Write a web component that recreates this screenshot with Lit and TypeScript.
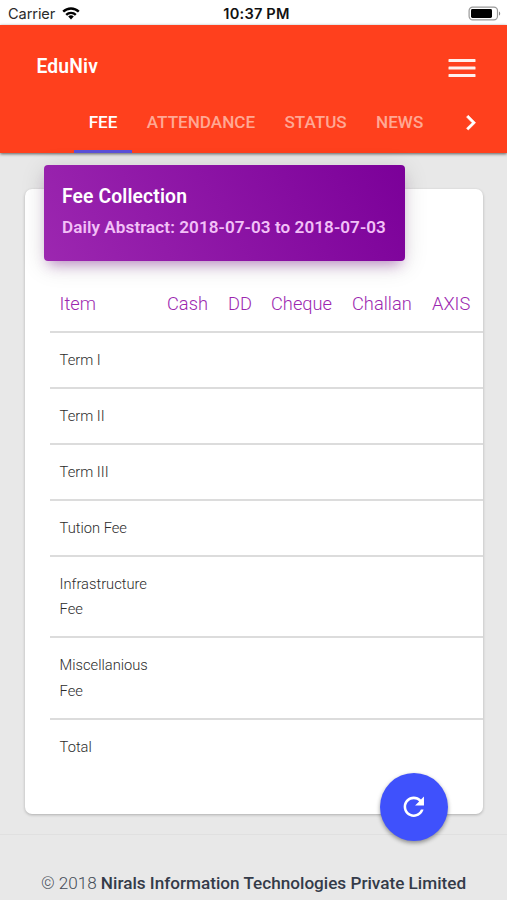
import { LitElement, html, css, svg } from "lit";
import { customElement } from "lit/decorators.js";
import { classMap } from "lit/directives/class-map.js";

const TABS = ["FEE", "ATTENDANCE", "STATUS", "NEWS"];
const COLUMNS = ["Item", "Cash", "DD", "Cheque", "Challan", "AXIS"];
const ROWS = ["Term I", "Term II", "Term III", "Tution Fee", "Infrastructure Fee", "Miscellanious Fee", "Total"];

const icon = (name: string, d: string, box = "0 0 24 24") =>
  html`<svg class=${name} viewBox=${box} fill="currentColor">${svg`<path d=${d} />`}</svg>`;

@customElement("status-bar")
class StatusBar extends LitElement {
  static styles = css`
    :host {
      display: grid;
      grid-template-columns: 1fr auto 1fr;
      align-items: center;
      box-sizing: border-box;
      height: 25px;
      padding: 3px 6px 0 8px;
      background: #fff;
      color: #111;
      font: 14.6px/20px Inter, sans-serif;
    }
    .left { display: flex; align-items: center; gap: 7px; }
    .carrier { color: #2a2a2a; letter-spacing: -0.1px; }
    .wifi { width: 18px; height: 14px; margin-top: -2px; }
    .time { font-weight: 600; font-size: 14.6px; letter-spacing: 0.2px; padding-left: 4px; }
    .battery { justify-self: end; width: 33px; height: 15px; margin-top: -2px; }
  `;
  render() {
    return html`
      <div class="left">
        <span class="carrier">Carrier</span>
        <svg class="wifi" viewBox="0 0 18 14" fill="none" stroke="#000" stroke-width="2.4">
          <path d="M1.2 5.6a11.2 11.2 0 0 1 15.6 0" />
          <path d="M4.2 8.8a6.9 6.9 0 0 1 9.6 0" />
          <path d="M9 13.4 6.2 10.6a4 4 0 0 1 5.6 0Z" fill="#000" stroke="none" />
        </svg>
      </div>
      <span class="time">10:37 PM</span>
      <svg class="battery" viewBox="0 0 33 15">
        <rect x="1.1" y="1.1" width="28.4" height="12.8" rx="3.6" fill="#fff" stroke="#999" stroke-width="1.2" />
        <rect x="3" y="3" width="21" height="9" rx="1.4" fill="#000" />
        <path d="M31 5.4c1.6.6 1.6 3.6 0 4.2Z" fill="#888" />
      </svg>
    `;
  }
}

@customElement("app-header")
class AppHeader extends LitElement {
  static styles = css`
    :host {
      display: flex;
      flex-direction: column;
      box-sizing: border-box;
      height: 128px;
      background: #ff401d;
      color: #fff;
      box-shadow: 0 1px 3px rgba(0, 0, 0, 0.6);
      position: relative;
    }
    .top {
      display: flex;
      align-items: center;
      justify-content: space-between;
      height: 68px;
      padding: 17px 27.5px 0 36.5px;
      box-sizing: border-box;
    }
    .brand { font-size: 19.3px; font-weight: 600; line-height: 24px; margin-top: -1px; letter-spacing: 0.15px; }
    .menu { width: 36px; height: 36px; opacity: 0.92; }
    .nav { display: flex; height: 60px; padding-left: 74px; }
    .tab {
      display: flex;
      align-items: center;
      box-sizing: border-box;
      height: 60px;
      padding: 0 14.7px;
      font-size: 17.1px;
      font-weight: 500;
      color: #ffa894;
      border-bottom: 3px solid transparent;
    }
    .active { color: #fff; border-bottom-color: #5a50d8; }
    .next { width: 29.4px; height: 29.4px; margin: 15px 22px 0 auto; stroke: currentColor; stroke-width: 0.5; }
  `;
  render() {
    return html`
      <div class="top">
        <span class="brand">EduNiv</span>
        ${icon("menu", "M3.4 18h17.2q.4 0 .4-.4v-1.2q0-.4-.4-.4H3.4q-.4 0-.4.4v1.2q0 .4.4.4zm0-5h17.2q.4 0 .4-.4v-1.2q0-.4-.4-.4H3.4q-.4 0-.4.4v1.2q0 .4.4.4zm0-5h17.2q.4 0 .4-.4V6.4q0-.4-.4-.4H3.4q-.4 0-.4.4v1.2q0 .4.4.4z")}
      </div>
      <div class="nav">
        ${TABS.map((t, i) => html`<div class=${classMap({ tab: true, active: i === 0 })}>${t}</div>`)}
        ${icon("next", "M10 6 8.59 7.41 13.17 12l-4.58 4.59L10 18l6-6z")}
      </div>
    `;
  }
}

@customElement("fee-card")
class FeeCard extends LitElement {
  static styles = css`
    :host {
      display: block;
      position: relative;
      box-sizing: border-box;
      height: 625px;
      margin: 36px 24px 0 25px;
      padding: 86px 0 0 25px;
      background: #fff;
      border-radius: 7px;
      box-shadow: 0 1px 3px rgba(0, 0, 0, 0.25);
    }
    .banner {
      position: absolute;
      left: 19px;
      top: -24px;
      box-sizing: border-box;
      width: 361px;
      height: 96px;
      padding: 19px 18px 0;
      border-radius: 4px;
      background: linear-gradient(60deg, #9c27b0, #7b0099);
      box-shadow: 0 5px 24px rgba(0, 0, 0, 0.14), 0 8px 12px -5px rgba(156, 39, 176, 0.45);
      color: #fff;
      white-space: nowrap;
    }
    .title { font-size: 19.3px; font-weight: 600; line-height: 26px; letter-spacing: 0.14px; }
    .range { font-size: 17.1px; font-weight: 600; line-height: 24px; margin-top: 5px; letter-spacing: 0.07px; color: #f2c0f7; }
    .row {
      display: grid;
      grid-template-columns: 107.4px 61px 43px 81px 80px 1fr;
      box-sizing: border-box;
      padding: 15.1px 0 13.1px;
      border-bottom: 2px solid #dcdcdc;
      font-size: 14.7px;
      font-weight: 300;
      line-height: 25.7px;
      color: #2c2c2c;
    }
    .row:last-child { border-bottom: 0; }
    .head { height: 58px; padding: 16px 0 0; font-size: 18.3px; color: #9c27b0; }
    .cell { padding-left: 9.6px; }
    .fab {
      position: absolute;
      left: 354.7px;
      top: 583.7px;
      display: flex;
      align-items: center;
      justify-content: center;
      width: 68.6px;
      height: 68.6px;
      border-radius: 50%;
      background: #3f51fc;
      color: #fff;
      box-shadow: 0 2px 4px rgba(0, 0, 0, 0.4);
    }
    .refresh { width: 29.6px; height: 29.6px; }
  `;
  render() {
    return html`
      <div class="banner">
        <div class="title">Fee Collection</div>
        <div class="range">Daily Abstract: 2018-07-03 to 2018-07-03</div>
      </div>
      <div class="table">
        <div class="row head">${COLUMNS.map((c) => html`<div class="cell">${c}</div>`)}</div>
        ${ROWS.map((r) => html`<div class="row"><div class="cell">${r}</div></div>`)}
      </div>
      <div class="fab">
        ${icon(
          "refresh",
          "M256 388c-72.6 0-132-59.4-132-132s59.4-132 132-132c36.3 0 69.3 15.4 92.4 39.6L278 234h154V80l-51.7 51.7C348.4 99.8 304.4 80 256 80c-96.8 0-176 79.2-176 176s78.1 176 176 176c81 0 148.3-54.1 169.4-128h-46.5c-18.8 49.6-67.2 84-122.9 84z",
          "0 0 512 512"
        )}
      </div>
    `;
  }
}

@customElement("app-root")
class AppRoot extends LitElement {
  static styles = css`
    :host {
      display: block;
      height: 900px;
      overflow: hidden;
      background: #e8e8e8;
      font-family: Roboto, sans-serif;
    }
    .footer {
      display: flex;
      justify-content: center;
      gap: 4px;
      margin-top: 20px;
      padding-top: 36px;
      border-top: 1px solid #e0e0e0;
      font-size: 17.15px;
      line-height: 24px;
      color: #444b57;
      white-space: nowrap;
    }
    .year { font-weight: 300; }
    .company { font-weight: 500; color: #343b49; }
  `;
  render() {
    return html`
      <status-bar></status-bar>
      <app-header></app-header>
      <fee-card></fee-card>
      <div class="footer">
        <span class="year">© 2018</span>
        <span class="company">Nirals Information Technologies Private Limited</span>
      </div>
    `;
  }
}
